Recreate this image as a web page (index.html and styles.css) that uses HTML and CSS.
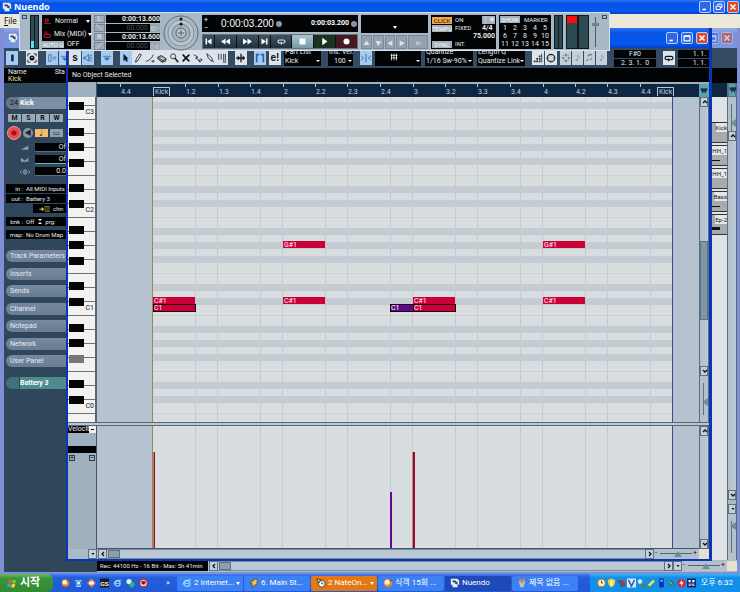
FILE: index.html
```html
<!DOCTYPE html>
<html lang="ko">
<head>
    <meta charset="UTF-8">
    <meta name="viewport" content="width=device-width, initial-scale=1.0">
    <title>Nuendo</title>
    <link rel="stylesheet" href="styles.css">
</head>
<body>
    <svg class="symbols" aria-hidden="true">
        <symbol id="app" viewBox="0 0 12 12"><path d="M1 1h8l2 2v5H9v3H3V8H1z" fill="#e8eef8"/><path d="M3 3h4v2H3zM5 6l4-2v4z" fill="#27405c"/></symbol>
        <symbol id="min" viewBox="0 0 12 12"><path d="M3 8h4v2H3z" fill="#fff"/></symbol>
        <symbol id="max" viewBox="0 0 12 12"><path d="M2.5 3.5h7v6h-7zM2.5 4h7" fill="none" stroke="#fff" stroke-width="1.4"/></symbol>
        <symbol id="restore" viewBox="0 0 12 12"><path d="M4.500 4V2.500h5v4H8M2.500 5h5v4h-5z" fill="none" stroke="#fff" stroke-width="1.2"/></symbol>
        <symbol id="close" viewBox="0 0 12 12"><path d="M3 3l6 6M9 3l-6 6" stroke="#fff" stroke-width="1.8"/></symbol>
        <symbol id="up" viewBox="0 0 8 8"><path d="M2 5l2-2 2 2" fill="none" stroke="#111" stroke-width="1.3"/></symbol>
        <symbol id="down" viewBox="0 0 8 8"><path d="M2 3l2 2 2-2" fill="none" stroke="#111" stroke-width="1.3"/></symbol>
        <symbol id="left" viewBox="0 0 8 8"><path d="M5 2L3 4l2 2" fill="none" stroke="#111" stroke-width="1.3"/></symbol>
        <symbol id="right" viewBox="0 0 8 8"><path d="M3 2l2 2-2 2" fill="none" stroke="#111" stroke-width="1.3"/></symbol>
        <symbol id="menu" viewBox="0 0 8 8"><path d="M2.500 3h3L4 5z" fill="#111"/></symbol>
        <symbol id="scroll" viewBox="0 0 12 12"><path d="M1 2h10v4H1z" fill="#16324c"/><path d="M3 6v4l3-3 3 3V6z" fill="#16324c"/></symbol>
        <symbol id="ie" viewBox="0 0 12 12"><circle cx="6" cy="6.500" r="3.500" fill="none" stroke="#7fd0ff" stroke-width="1.8"/><path d="M3 6.500h6" stroke="#7fd0ff" stroke-width="1.4"/><path d="M1 8Q3 2 11 2" fill="none" stroke="#bfe8ff"/></symbol>
        <symbol id="ball" viewBox="0 0 12 12"><circle cx="6" cy="6" r="5" fill="#f08a24"/><circle cx="5" cy="5" r="3" fill="#fff3d8"/><path d="M8 1l3 2-2 2z" fill="#a84c08"/></symbol>
        <symbol id="loop" viewBox="0 0 12 12"><path d="M5 8H3.500C.5 8 .5 4 3.500 4h5c3 0 3 4 0 4H8" fill="none" stroke="currentColor" stroke-width="1.400"/><path d="M5 6l3 2-3 2.500z" fill="currentColor"/></symbol>
        <symbol id="filter" viewBox="0 0 12 12"><path d="M1 4h10M3 6h6l-3 3z" fill="#456f9c" stroke="#456f9c"/></symbol>
    </svg>

    <header class="titlebar titlebar-main">
        <svg class="app-icon"><use href="#app"/></svg>
        <h1>Nuendo</h1>
        <div class="window-buttons">
            <button aria-label="Minimize"><svg><use href="#min"/></svg></button>
            <button aria-label="Restore"><svg><use href="#restore"/></svg></button>
            <button class="close" aria-label="Close"><svg><use href="#close"/></svg></button>
        </div>
    </header>
    <nav class="menubar"><a href="#file"><u>F</u>ile</a></nav>

    <main class="desktop">
        <!-- Project window behind the editor -->
        <section class="window project">
            <div class="titlebar titlebar-inactive">
                <svg class="app-icon"><use href="#app"/></svg>
                <div class="window-buttons">
                    <button aria-label="Maximize"><svg><use href="#max"/></svg></button>
                    <button class="close" aria-label="Close"><svg><use href="#close"/></svg></button>
                </div>
            </div>
            <div class="toolbar project-tools">
                <button class="tool on" aria-label="Activate"><svg viewBox="0 0 12 12"><path d="M5 2h3v8H5z" fill="#0b2440"/></svg></button>
                <button class="tool" aria-label="Snap view"><svg viewBox="0 0 12 12"><path d="M1 4V1h3M8 1h3v3M11 8v3H8M4 11H1V8" fill="none" stroke="#111"/><circle cx="6" cy="6" r="3" fill="#111"/><path d="M5 5h2v1H5z" fill="#fff"/></svg></button>
                <span class="tool-group">
                    <button class="tool on" aria-label="Inspector"><svg viewBox="0 0 12 12"><path d="M2 2h3v8H2zM7 6l2-2 2 2-2 2z" fill="none" stroke="#456f9c"/></svg></button>
                    <button class="tool on" aria-label="Info line"><svg><use href="#filter"/></svg></button>
                </span>
            </div>
            <div class="infoline project-info"><div>Name<br><em>Kick</em></div><div>Sta</div></div>
            <div class="project-body">
                <aside class="inspector">
                    <div class="track-name"><span>24</span><strong>Kick</strong></div>
                    <div class="track-buttons"><button>M</button><button>S</button><button>R</button><button>W</button></div>
                    <div class="record-row">
                        <button class="rec" aria-label="Record enable"></button>
                        <button class="monitor" aria-label="Monitor">◀</button>
                        <button class="note-mode" aria-label="Timebase">♩</button>
                        <button class="lane-mode" aria-label="Lanes">▭</button>
                    </div>
                    <div class="faders">
                        <div class="fader"><svg viewBox="0 0 12 8"><path d="M1 6l9-5v5z" fill="#8d9db0"/></svg><span>Of</span></div>
                        <div class="fader full"><svg viewBox="0 0 12 8"><path d="M1 1v5h9V1L6 5z" fill="#8d9db0"/></svg><span>Of</span></div>
                        <div class="fader end"><svg viewBox="0 0 12 8"><path d="M2 2L0 4l2 2M10 2l2 2-2 2M6 1v6M4 4h4" fill="none" stroke="#8d9db0"/><circle cx="6" cy="4" r="2.500" fill="none" stroke="#8d9db0"/></svg><span>0.0</span></div>
                    </div>
                    <dl class="routing">
                        <div><dt>in :</dt><dd>All MIDI Inputs</dd></div>
                        <div><dt>out :</dt><dd>Battery 3</dd></div>
                        <div class="channel"><dt><b>➜▥</b></dt><dd>chn:</dd></div>
                        <div class="bank"><dt>bnk :</dt><dd>Off <i></i> prg:</dd></div>
                        <div class="map"><dt>map:</dt><dd>No Drum Map</dd></div>
                    </dl>
                    <div class="tabs">
                        <button>Track Parameters</button>
                        <button>Inserts</button>
                        <button>Sends</button>
                        <button>Channel</button>
                        <button>Notepad</button>
                        <button>Network</button>
                        <button>User Panel</button>
                    </div>
                    <button class="instrument">Battery 3</button>
                </aside>
                <div class="lanes">
                    <div class="lanes-ruler"></div>
                    <div class="part kick"><span>Kick</span></div>
                    <div class="part line"><span>HH_1</span></div>
                    <div class="part"><span>HH_1</span></div>
                    <div class="part line"><span>Bass</span></div>
                    <div class="part thick"><span>Ep-2</span></div>
                </div>
                <div class="vbar project-vbar">
                    <button class="corner-icon" aria-label="Ruler menu"><svg><use href="#scroll"/></svg></button>
                    <div class="vzoom tall"><i></i></div>
                    <button aria-label="Up"><svg><use href="#up"/></svg></button>
                    <div class="track"></div>
                    <button aria-label="Down"><svg><use href="#down"/></svg></button>
                    <button class="preset" aria-label="Zoom presets"><svg><use href="#menu"/></svg></button>
                    <div class="vzoom"><i></i></div>
                </div>
            </div>
            <footer class="hbar project-hbar">
                <output>Rec: 44100 Hz - 16 Bit - Max: 5h 41min</output>
                <button aria-label="Left"><svg><use href="#left"/></svg></button>
                <div class="track"><span></span></div>
                <button aria-label="Right"><svg><use href="#right"/></svg></button>
                <button aria-label="Zoom presets"><svg><use href="#menu"/></svg></button>
                <div class="hzoom"><i></i></div>
                <span class="grip"></span>
            </footer>
        </section>

        <!-- Key editor -->
        <section class="window editor">
            <div class="titlebar">
                <div class="window-buttons">
                    <button aria-label="Minimize"><svg><use href="#min"/></svg></button>
                    <button aria-label="Maximize"><svg><use href="#max"/></svg></button>
                    <button class="close" aria-label="Close"><svg><use href="#close"/></svg></button>
                </div>
            </div>
            <div class="toolbar">
                <span class="tool-group">
                    <button class="tool solo" aria-label="Solo">s</button>
                    <button class="tool on" aria-label="Feedback"><svg viewBox="0 0 12 12"><path d="M1 5h2l4-3v8L3 7H1zM8 4l3-2M8 6h3M8 8l3 2" fill="none" stroke="#2c5a8c"/></svg></button>
                </span>
                <button class="tool on" aria-label="Info line"><svg><use href="#filter"/></svg></button>
                <span class="tool-group edit-tools">
                    <button class="tool on" aria-label="Select"><svg viewBox="0 0 12 12"><path d="M3 1v9l2-2 2 3 1-1-1-3h2z" fill="#0b1a30"/></svg></button>
                    <button class="tool" aria-label="Draw"><svg viewBox="0 0 12 12"><path d="M3 11l1-4 4-6 2 1-4 7z" fill="none" stroke="#222"/></svg></button>
                    <button class="tool" aria-label="Line"><svg viewBox="0 0 12 12"><path d="M1 10Q7 9 10 2M8 10l2 1 1-2z" fill="none" stroke="#222"/></svg></button>
                    <button class="tool" aria-label="Erase"><svg viewBox="0 0 12 12"><path d="M1 5l4-2 6 4-1 3-4 1-5-4zM1 5l6 4 4-2M7 9l-1 2" fill="#999" stroke="#222"/></svg></button>
                    <button class="tool" aria-label="Zoom"><svg viewBox="0 0 12 12"><circle cx="5" cy="4" r="3" fill="none" stroke="#222"/><path d="M7 6l4 5" stroke="#222" stroke-width="2"/></svg></button>
                    <button class="tool" aria-label="Mute"><svg viewBox="0 0 12 12"><path d="M2 2l8 8M10 2l-8 8" stroke="#111" stroke-width="2"/></svg></button>
                    <button class="tool" aria-label="Split"><svg viewBox="0 0 12 12"><path d="M1 2l5 3-3 1 6 4M8 7l3 1-3 3-1-3" fill="none" stroke="#222"/></svg></button>
                    <button class="tool" aria-label="Glue"><svg viewBox="0 0 12 12"><path d="M2 1l2 1 5 5-1 3-4-4zM8 9l3 2" fill="none" stroke="#222"/></svg></button>
                    <button class="tool" aria-label="Warp"><svg viewBox="0 0 12 12"><path d="M2 1v7M5 1v7M8 1v9M10 1v9M7 11h4" stroke="#222"/></svg></button>
                </span>
                <button class="tool" aria-label="Autoscroll"><svg viewBox="0 0 12 12"><path d="M6 1v10M0 6h10" stroke="#111" stroke-width="1.500"/><path d="M2 3l3 3-3 3zM8 3l3 3-3 3z" fill="#111"/></svg></button>
                <span class="tool-group wide-gap">
                    <button class="tool on" aria-label="Part borders"><svg viewBox="0 0 12 12"><path d="M2 11V2h3M10 11V2H7" fill="none" stroke="#2565aa" stroke-width="2"/></svg></button>
                    <button class="tool edit" aria-label="Edit active part">e!</button>
                </span>
                <label class="pick part-pick"><span>Part List</span><select><option>Kick</option></select></label>
                <label class="pick velocity-pick"><span>Ins. Vel.</span><select><option>100</option></select></label>
                <button class="tool on" aria-label="Snap"><svg viewBox="0 0 12 12"><path d="M6 1v10M0 3l3 3-3 3M12 3L9 6l3 3" fill="none" stroke="#2c5a8c"/></svg></button>
                <label class="pick snap-pick"><svg viewBox="0 0 12 12"><path d="M2 4h8M2 7h8M3 2v8M6 2v8M9 2v8" stroke="#eee"/></svg><select aria-label="Snap type"><option></option></select></label>
                <label class="pick quantize-pick"><span>Quantize</span><select><option>1/16 Sw-90%</option></select></label>
                <label class="pick quantize-pick"><span>Length Q</span><select><option>Quantize Link</option></select></label>
                <span class="tool-group">
                    <button class="tool" aria-label="Step input"><svg viewBox="0 0 12 12"><path d="M1 9h2v2H1zM4 9h2v2H4zM4 6h2v2H4zM7 9h2v2H7zM7 6h2v2H7zM7 3h2v2H7zM10 1h1v10h-1z" fill="#222"/></svg></button>
                    <button class="tool" aria-label="MIDI input"><svg viewBox="0 0 12 12"><circle cx="6" cy="6" r="4.500" fill="none" stroke="#222" stroke-width="1.500"/><path d="M3 6h1M8 6h1M6 3v1M6 8v1" stroke="#222"/></svg></button>
                </span>
                <span class="tool-group dim">
                    <button class="tool" aria-label="Pitch"><svg viewBox="0 0 12 12"><path d="M6 1v3M6 8v3M1 6h3M8 6h3M3 3h1M8 3h1M3 9h1M8 9h1" stroke="#777" stroke-width="2"/></svg></button>
                    <button class="tool" aria-label="Note on">♪</button>
                    <button class="tool" aria-label="Velocity on">♫</button>
                    <button class="tool" aria-label="Velocity off">♪</button>
                </span>
                <output class="mouse-info"><span>F#0</span><span>2. 3. 1.&nbsp; 0</span></output>
                <button class="tool" aria-label="Loop"><svg><use href="#loop"/></svg></button>
                <output class="loop-info"><span>1. 1.</span><span>1. 1.</span></output>
            </div>
            <div class="infoline">No Object Selected</div>
            <div class="editor-grid">
                <div class="ruler-head"></div>
                <div class="ruler">
                    <span class="tick" style="--x: 23">4.4</span>
                    <span class="locator" style="--x: 56">Kick</span>
                    <span class="tick" style="--x: 88">1.2</span>
                    <span class="tick" style="--x: 121">1.3</span>
                    <span class="tick" style="--x: 153">1.4</span>
                    <span class="tick bar" style="--x: 186">2</span>
                    <span class="tick" style="--x: 218">2.2</span>
                    <span class="tick" style="--x: 250">2.3</span>
                    <span class="tick" style="--x: 283">2.4</span>
                    <span class="tick bar" style="--x: 316">3</span>
                    <span class="tick" style="--x: 348">3.2</span>
                    <span class="tick" style="--x: 380">3.3</span>
                    <span class="tick" style="--x: 413">3.4</span>
                    <span class="tick bar" style="--x: 446">4</span>
                    <span class="tick" style="--x: 478">4.2</span>
                    <span class="tick" style="--x: 510">4.3</span>
                    <span class="tick" style="--x: 543">4.4</span>
                    <span class="locator locator-end" style="--x: 560">Kick</span>
                </div>
                <button class="corner-icon" aria-label="Ruler menu"><svg><use href="#scroll"/></svg></button>

                <div class="keyboard">
                    <div class="octave"><span>C3</span></div>
                    <div class="octave"><span>C2</span></div>
                    <div class="octave"><span>C1</span></div>
                    <div class="octave hovered"><span>C0</span></div>
                    <div class="octave"></div>
                </div>
                <div class="roll">
                    <div class="part-area"></div>
                    <span class="note" style="--x: 56; --y: 200">C#1</span>
                    <span class="note selected" style="--x: 56; --y: 207">C1</span>
                    <span class="note" style="--x: 186; --y: 144">G#1</span>
                    <span class="note" style="--x: 186; --y: 200">C#1</span>
                    <span class="note selected soft" style="--x: 293; --y: 207">C1</span>
                    <span class="note" style="--x: 316; --y: 200">C#1</span>
                    <span class="note selected" style="--x: 316; --y: 207">C1</span>
                    <span class="note" style="--x: 446; --y: 144">G#1</span>
                    <span class="note" style="--x: 446; --y: 200">C#1</span>
                </div>
                <div class="vbar">
                    <button aria-label="Up"><svg><use href="#up"/></svg></button>
                    <div class="track"><span></span></div>
                    <button aria-label="Down"><svg><use href="#down"/></svg></button>
                    <div class="vzoom"><i></i></div>
                </div>

                <div class="splitter"></div>

                <div class="lane-head">
                    <label class="pick lane-pick"><select aria-label="Controller"><option>Velocity</option></select></label>
                    <div class="lane-value"></div>
                    <div class="lane-buttons"><button aria-label="Add lane">+</button><button aria-label="Remove lane">−</button></div>
                </div>
                <div class="velocity">
                    <div class="part-area"></div>
                    <span class="stick cursor" style="--x: 56; --h: 96"></span>
                    <span class="stick soft" style="--x: 293; --h: 56"></span>
                    <span class="stick" style="--x: 315; --h: 96"></span>
                </div>
                <div class="vbar">
                    <button aria-label="Up"><svg><use href="#up"/></svg></button>
                    <div class="track"></div>
                    <button aria-label="Down"><svg><use href="#down"/></svg></button>
                </div>
            </div>
            <div class="hbar">
                <button class="lane-menu" aria-label="Lane presets"><svg><use href="#menu"/></svg></button>
                <button aria-label="Left"><svg><use href="#left"/></svg></button>
                <div class="track"><span></span></div>
                <button aria-label="Right"><svg><use href="#right"/></svg></button>
                <div class="hzoom"><i></i></div>
                <span class="grip"></span>
            </div>
        </section>
    </main>

    <!-- Transport panel floats above both windows -->
    <section class="transport" aria-label="Transport">
        <button class="panel-close" aria-label="Close panel"></button>
        <div class="meter input-meter"><i></i><i></i></div>
        <div class="modes screen">
            <div class="mode"><svg viewBox="0 0 12 10"><circle cx="5" cy="3" r="2" fill="none" stroke="#d3202a" stroke-width="1.500"/><path d="M1 7h10" stroke="#d3202a"/></svg><span>Normal</span><i class="arrow"></i></div>
            <div class="mode"><svg viewBox="0 0 12 10"><circle cx="4" cy="2" r="1.500" fill="none" stroke="#d3202a"/><rect x="1" y="4" width="9" height="4" rx="2" fill="none" stroke="#d3202a" stroke-width="1.300"/></svg><span>Mix (MIDI)</span><i class="arrow"></i></div>
            <div class="auto"><button>AUTO Q</button><span>OFF</span></div>
        </div>
        <div class="locators">
            <button>L</button><div class="screen"><b>0:00:13.600</b></div>
            <button>╲</button><div class="screen faint"><span>00.000</span><button>▯▷</button></div>
            <button>R</button><div class="screen"><b>0:00:13.600</b></div>
            <button>╱</button><div class="screen faint"><span>00.000</span><button>▷▯</button></div>
        </div>
        <svg class="jog" viewBox="0 0 36 36">
            <circle cx="18" cy="18" r="17" fill="#aab8c3" stroke="#5d6b76"/>
            <circle cx="18" cy="18" r="13" fill="#b9c5ce" stroke="#84929d"/>
            <circle cx="18" cy="18" r="9" fill="#a5b3be" stroke="#74828d"/>
            <circle cx="18" cy="18" r="5" fill="#b9c5ce" stroke="#596672"/>
            <path d="M18 15v6M15 18h6" stroke="#596672"/>
            <circle cx="18" cy="4" r="1.500" fill="#111"/><circle cx="18" cy="9" r="1.500" fill="#111"/>
        </svg>
        <div class="main-transport">
            <div class="screen time">
                <span class="nudge">+<br>−</span>
                <strong>0:00:03.200</strong><i class="clock"></i>
                <b>0:00:03.200</b><i class="clock"></i>
            </div>
            <div class="transport-buttons">
                <button class="narrow" aria-label="To start"><svg viewBox="0 0 12 12"><path d="M2 2h2v8H2zM10 2v8L4 6z" fill="#fff"/></svg></button>
                <button aria-label="Rewind"><svg viewBox="0 0 12 12"><path d="M6 2v8L0 6zM12 2v8L6 6z" fill="#fff"/></svg></button>
                <button aria-label="Forward"><svg viewBox="0 0 12 12"><path d="M0 2v8l6-4zM6 2v8l6-4z" fill="#fff"/></svg></button>
                <button class="narrow" aria-label="To end"><svg viewBox="0 0 12 12"><path d="M2 2v8l6-4zM8 2h2v8H8z" fill="#fff"/></svg></button>
                <button aria-label="Cycle"><svg><use href="#loop"/></svg></button>
                <button class="stop" aria-label="Stop"><svg viewBox="0 0 12 12"><path d="M2 2h8v8H2z" fill="#fff"/></svg></button>
                <button class="play" aria-label="Play"><svg viewBox="0 0 12 12"><path d="M3 1v10l7-5z" fill="#fff"/></svg></button>
                <button class="record" aria-label="Record"><svg viewBox="0 0 12 12"><circle cx="6" cy="6" r="4" fill="#fff"/></svg></button>
            </div>
        </div>
        <div class="arranger">
            <div class="screen"><i class="arrow"></i></div>
            <div class="arranger-buttons">
                <button>▲</button><button>▼</button><button>◀</button><button>▶</button><button class="wide">⇇</button>
            </div>
        </div>
        <div class="sync screen">
            <button class="lit">CLICK</button><span>ON</span><b class="precount">‖✳</b>
            <button>TEMPO</button><span>FIXED</span><b>4/4</b>
            <b class="tempo">75.000</b>
            <button>SYNC</button><span>INT.</span>
        </div>
        <div class="markers screen">
            <div class="marker-head"><button>SHOW</button><span>MARKER</span></div>
            <ol>
                <li>1</li><li>2</li><li>3</li><li>4</li><li>5</li>
                <li>6</li><li>7</li><li>8</li><li>9</li><li>10</li>
                <li>11</li><li>12</li><li>13</li><li>14</li><li>15</li>
            </ol>
        </div>
        <div class="meter"><i></i><i></i></div>
        <div class="master-meter"><i class="clip"></i><i></i></div>
        <div class="volume"><i></i></div>
        <button class="panel-close" aria-label="Panel menu"></button>
    </section>

    <footer class="taskbar">
        <button class="start">
            <svg viewBox="0 0 12 12"><path d="M2 2q2-1 4 0L5 6Q3 5 1 6z" fill="#f0582a"/><path d="M7 2q2 1 4 0l-1 4q-2 1-4 0z" fill="#86c440"/><path d="M1 7q2-1 4 0l-1 4Q2 10 0 11z" fill="#3aa0ef"/><path d="M6 7q2 1 4 0l-1 4q-2 1-4 0z" fill="#ffd02e"/></svg>
            시작
        </button>
        <div class="quick">
            <svg><use href="#ball"/></svg>
            <svg viewBox="0 0 12 12"><path d="M2 2h8l-1 9H3z" fill="#d6edff"/><circle cx="6" cy="6" r="3" fill="none" stroke="#2680d8" stroke-width="1.500"/></svg>
            <svg viewBox="0 0 12 12"><path d="M6 0l6 6-6 6-6-6z" fill="#f0803c"/><path d="M3 4h6v4H3z" fill="#fff"/></svg>
            <svg viewBox="0 0 12 12"><path d="M0 0h12v12H0z" fill="#1b1b1b"/><text x="6" y="10" text-anchor="middle">GS</text></svg>
            <svg><use href="#ie"/></svg>
            <svg viewBox="0 0 12 12"><circle cx="4" cy="4" r="3.500" fill="#d9eefa"/><path d="M4 8l5-4 3 4-3 4H6z" fill="#35b56c"/></svg>
            <svg viewBox="0 0 12 12"><circle cx="6" cy="6" r="5" fill="#eee" stroke="#c22" stroke-width="1.500"/><path d="M3 3h6v4H3z" fill="#c22"/><path d="M4 8l2-3 2 3z" fill="#111"/></svg>
        </div>
        <span class="more">»</span>
        <div class="tasks">
            <button><svg><use href="#ie"/></svg><span>2 Internet...</span><i class="arrow"></i></button>
            <button><svg viewBox="0 0 12 12"><path d="M3 11l1-4-3-1 7-5 3 3-2 1 1 2z" fill="#f2c25a" stroke="#6b4a16"/></svg><span>6. Main St...</span></button>
            <button class="alert"><svg viewBox="0 0 12 12"><circle cx="7" cy="7" r="4" fill="#fff" stroke="#333"/><path d="M1 1l5 1-3 4zM7 5v2h2" fill="#ffd02e" stroke="#333"/></svg><span>2 NateOn...</span><i class="arrow"></i></button>
            <button><svg><use href="#ball"/></svg><span>식객 15회 ...</span></button>
            <button class="active"><svg><use href="#app"/></svg><span>Nuendo</span></button>
            <button><svg viewBox="0 0 12 12"><path d="M2 4l8-1-2 8H4z" fill="#b8c4c8"/><path d="M3 1l3 5M9 0L6 6M6 1v4" stroke="#d6823c" stroke-width="1.500"/></svg><span>제목 없음 ...</span></button>
        </div>
        <div class="tray">
            <svg viewBox="0 0 12 12"><circle cx="6" cy="6" r="5" fill="#fff2c2" stroke="#c57b1c" stroke-width="1.500"/><path d="M6 3v3h2" stroke="#222" fill="none"/></svg>
            <svg viewBox="0 0 12 12"><path d="M1 2l5-2 5 2q0 7-5 10Q1 9 1 2z" fill="#f3d33c"/><path d="M5 3h2v6H5z" fill="#fff"/></svg>
            <svg viewBox="0 0 12 12"><path d="M1 2h7v5H1zM4 6h7v5H4z" fill="#47607e"/><path d="M6 3l5 5M11 3L6 8" stroke="#e02a2a" stroke-width="1.500"/></svg>
            <svg viewBox="0 0 12 12"><path d="M0 0h12v12H0z" fill="#dbe6f2"/><path d="M2 2l4 8 4-8" fill="none" stroke="#2855b5" stroke-width="2"/></svg>
            <svg viewBox="0 0 12 12"><circle cx="4" cy="4" r="3" fill="#d8f1e2"/><path d="M4 8l7-3v6H6z" fill="#33a263"/><path d="M7 7l4 4M11 7l-4 4" stroke="#d22"/></svg>
            <svg viewBox="0 0 12 12"><path d="M2 11l-1-3 7-7 3 3-7 7z" fill="#cdeb78" stroke="#527f29"/></svg>
            <svg viewBox="0 0 12 12"><path d="M3 0h6v12H3z" fill="#1230a8"/><path d="M4 2h4v2H4z" fill="#7aa4ff"/></svg>
            <svg viewBox="0 0 12 12"><path d="M1 2l6 1 4 6-4 2-5-4z" fill="#2e8061"/><path d="M3 4l4 4" stroke="#cfe"/></svg>
            <svg viewBox="0 0 12 12"><circle cx="6" cy="6" r="5.500" fill="#e22230"/><path d="M7 1L3 7h3l-1 4 4-6H6z" fill="#fff"/></svg>
            <svg viewBox="0 0 12 12"><path d="M0 0h12v12H0z" fill="#10246e"/><path d="M2 2h3v3H2zM7 2h3v3H7zM2 7h8v1H2zM2 9h3v1H2zM7 9h3v1H7z" fill="#fff"/></svg>
            <time>오후 6:32</time>
        </div>
    </footer>
</body>
</html>
```

FILE: styles.css
```css
:root {
    --slate: #31475c;
    --panel: #a9b8c6;
    --roll: #d8dde0;
    --stripe: #c4cbd2;
    --outside: #b6c2d0;
    --gridline: #c5cbd0;
    --note: #cc0038;
    --soft: #5d0a8c;
}

* {
    box-sizing: border-box;
}

body {
    margin: 0;
    min-height: 100vh;
    display: flex;
    flex-direction: column;
    position: relative;
    overflow: hidden;
    background: var(--slate);
    color: #e6ebf0;
    font: 7px/9px Roboto, "Noto Sans CJK KR", sans-serif;
}

button, select {
    font: inherit;
    color: inherit;
    border: 0;
    padding: 0;
    margin: 0;
    border-radius: 0;
    background: none;
    appearance: none;
}

svg {
    display: block;
    width: 10px;
    height: 10px;
    flex: none;
}

.symbols {
    position: absolute;
    width: 0;
    height: 0;
}

.arrow {
    border: 2px solid transparent;
    border-top: 3px solid #fff;
    border-bottom: 0;
}

.screen {
    background: #020304;
}

/* Title bars */
.titlebar {
    display: flex;
    align-items: center;
    height: 20px;
    padding: 0 4px;
    background: linear-gradient(#2a72f5, #0753e6 25%, #0658ee 80%, #0440c4);
}

.titlebar-main {
    height: 14px;
    padding: 0 1px 0 2px;
}

.titlebar h1 {
    margin: 0 0 0 2px;
    font: bold 9px/14px "Noto Sans", sans-serif;
    color: #fff;
}

.titlebar-inactive {
    background: linear-gradient(#93aceb, #7590dc 30%, #7a98e2);
}

.app-icon {
    width: 10px;
    height: 10px;
}

.window-buttons {
    display: flex;
    gap: 2px;
    margin-left: auto;
}

.window-buttons button {
    width: 12px;
    height: 12px;
    border: 1px solid #b8cdf8;
    border-radius: 2px;
    background: #2e68e6;
}

.window-buttons .close {
    background: #dc4c28;
}

.titlebar-inactive button {
    opacity: .6;
}

.menubar {
    height: 14px;
    padding: 2px 4px;
    background: #ece9d8;
    font: 8px/10px "Noto Sans", sans-serif;
}

.menubar a {
    color: #111;
    text-decoration: none;
}

/* Windows */
.desktop {
    flex: 1;
    display: flex;
    flex-direction: column;
    position: relative;
}

.window {
    display: flex;
    flex-direction: column;
}

.project {
    flex: 1;
    border: solid #7f8fd6;
    border-width: 0 3px 2px 4px;
    background: var(--slate);
}

.editor {
    position: absolute;
    top: 0;
    left: 66px;
    right: 28px;
    bottom: 13px;
    border: solid #0a35b8;
    border-width: 0 3px 2px 2px;
    background: #9fb0bf;
}

.editor .titlebar {
    padding: 0 1px;
}

.editor .window-buttons {
    gap: 3px;
}

.toolbar {
    display: flex;
    align-items: center;
    height: 20px;
    gap: 7px;
    padding: 0 0 0 1px;
    background: #344b62;
    overflow: hidden;
}

.project-tools {
    padding-left: 2px;
    gap: 8px;
}

.tool-group {
    display: flex;
    gap: 1px;
}

.tool-group.wide-gap {
    gap: 3px;
}

.tool-group.edit-tools {
    gap: 0;
}

.tool {
    display: grid;
    place-items: center;
    flex: none;
    width: 12px;
    height: 14px;
    background: #dbe4ec;
    color: #111;
}

.tool.on {
    background: #a5cbf2;
}

.tool.solo, .tool.edit {
    font: bold 10px/12px "Liberation Sans", sans-serif;
}

.tool-group.dim {
    margin-left: -4px;
}

.dim .tool {
    width: 11px;
    background: #c5d0da;
    color: #70767c;
}

.pick {
    display: grid;
    flex: none;
    position: relative;
    height: 16px;
    background: #020304;
    white-space: nowrap;
    overflow: hidden;
}

.pick > span {
    padding-left: 1px;
    line-height: 5px;
}

.pick select {
    width: 100%;
    padding-left: 1px;
    line-height: 9px;
    align-self: end;
}

.pick > svg {
    position: absolute;
    left: 14px;
    top: 2px;
}

.pick::after {
    content: "";
    position: absolute;
    right: 1px;
    bottom: 4px;
    border: 2px solid transparent;
    border-top-color: #fff;
    border-bottom: 0;
}

.part-pick {
    width: 37px;
    margin-left: -4px;
}

.velocity-pick {
    width: 25px;
}

.velocity-pick select {
    padding-left: 6px;
}

.snap-pick {
    width: 46px;
    margin-left: -4px;
}

.quantize-pick {
    width: 48px;
    margin-left: -3px;
}

.mouse-info, .loop-info {
    display: flex;
    flex: none;
    flex-direction: column;
    width: 42px;
    text-align: center;
}

.mouse-info span, .loop-info span {
    height: 8px;
    line-height: 8px;
    background: #020304;
}

.mouse-info span + span, .loop-info span + span {
    margin-top: 1px;
}

.loop-info {
    width: 32px;
    margin-left: -4px;
    text-align: right;
}

.loop-info span {
    padding-right: 4px;
}

.infoline {
    height: 14px;
    padding-left: 4px;
    line-height: 15px;
    background: #010203;
}

/* Key editor grid */
.editor-grid {
    flex: 1;
    display: grid;
    grid-template-columns: 29px 1fr 10px;
    grid-template-rows: 15px 325px 4px 1fr;
}

.ruler-head {
    background: #9fb0bf;
    border-right: 1px solid #445766;
}

.ruler {
    position: relative;
    margin-top: 2px;
    background: #0d2642;
    color: #c6d0da;
    overflow: hidden;
}

.ruler span {
    position: absolute;
    left: calc(var(--x) * 1px);
    top: 0;
}

.ruler .tick {
    padding: 4px 0 0 1px;
}

.ruler .tick::before {
    content: "";
    position: absolute;
    left: 0;
    top: 0;
    width: 1px;
    height: 3px;
    background: #b8c4cf;
}

.ruler .locator {
    top: 3px;
    padding: 0 1px;
    line-height: 8px;
    border: 1px solid #b8c4cf;
    border-width: 1px 1px 0;
}

.corner-icon {
    display: grid;
    place-items: center;
    width: 10px;
    margin-top: 2px;
    background: #5ba3ad;
}

.corner-icon svg {
    width: 8px;
}

.keyboard {
    overflow: hidden;
    border-right: 2px solid #566974;
    background: #f2f2f0;
}

.octave {
    height: 98px;
    padding: 87px 1px 0 0;
    text-align: right;
    color: #222;
    --black: #050505;
    --fsharp: var(--black);
    background:
        linear-gradient(transparent 9px, var(--black) 9px 17px, transparent 17px 24px, var(--black) 24px 32px, transparent 32px 40px, var(--fsharp) 40px 48px, transparent 48px 65px, var(--black) 65px 73px, transparent 73px 81px, var(--black) 81px 89px, transparent 89px) 1px 0 / 15px 98px no-repeat,
        repeating-linear-gradient(#6f7375 0 1px, transparent 1px 14px);
}

/* B3 down to C#3 is scrolled out of view */
.octave:first-child {
    margin-top: -76px;
}

.octave.hovered {
    --fsharp: #777;
}

.octave span {
    line-height: 9px;
}

.roll, .velocity {
    position: relative;
    background: var(--outside);
    overflow: hidden;
}

.part-area {
    width: 521px;
    height: 100%;
    margin-left: 55px;
    border: solid #8c8f4e;
    border-width: 0 1px;
    border-right-color: #3b4a8c;
    background:
        linear-gradient(90deg, transparent 42px, var(--gridline) 42px 43px, transparent 43px 64px, var(--gridline) 64px) 0 0 / 65px 100%,
        var(--roll);
}

.roll .part-area {
    background:
        linear-gradient(90deg, transparent 42px, var(--gridline) 42px 43px, transparent 43px 64px, var(--gridline) 64px) 0 0 / 65px 100%,
        linear-gradient(#cbd0d4 1px, transparent 1px 11px, var(--stripe) 11px 18px, transparent 18px 25px, var(--stripe) 25px 32px, transparent 32px 39px, var(--stripe) 39px 46px, transparent 46px 56px, #cbd0d4 56px 57px, transparent 57px 67px, var(--stripe) 67px 74px, transparent 74px 81px, var(--stripe) 81px 88px, transparent 88px) 0 -76px / 100% 98px,
        var(--roll);
}

.note {
    position: absolute;
    left: calc(var(--x) * 1px);
    top: calc(var(--y) * 1px);
    width: 42px;
    height: 7px;
    padding-left: 1px;
    line-height: 8px;
    background: var(--note);
    color: #fff;
    overflow: hidden;
}

.note.selected {
    width: 43px;
    height: 8px;
    padding-left: 0;
    border: 1px solid #240010;
    line-height: 7px;
}

.note.soft {
    width: 24px;
    background: var(--soft);
}

.splitter {
    grid-column: 1 / -1;
    background: #b9c6cf;
    border: solid #566974;
    border-width: 1px 0;
}

.lane-head {
    border-right: 1px solid #445766;
}

.lane-pick {
    height: 7px;
    width: 28px;
}

.lane-pick select {
    padding: 0;
    line-height: 7px;
}

.lane-pick::after {
    right: 0;
    bottom: 0;
    width: 7px;
    height: 7px;
    border: 0;
    background: linear-gradient(#111, #111) 2px 3px / 3px 1px no-repeat, #eee;
}

.lane-value {
    height: 7px;
    margin-top: 13px;
    background: #010203;
}

.lane-buttons {
    display: flex;
    justify-content: space-between;
    margin-top: 2px;
    padding: 0 1px;
}

.lane-buttons button {
    width: 6px;
    height: 6px;
    border: 1px solid #2c3e4d;
    line-height: 4px;
    color: #111;
}

.velocity {
    border-bottom: 1px solid #445766;
}

.stick {
    position: absolute;
    left: calc(var(--x) * 1px);
    bottom: 0;
    width: 3px;
    height: calc(var(--h) * 1px);
    background: linear-gradient(90deg, #c9818c 1px, #8f0f2c 1px);
}

.stick.cursor {
    width: 2px;
    background: linear-gradient(90deg, #d0705c 1px, #8f0f2c 1px);
}

.stick.soft {
    width: 2px;
    background: var(--soft);
}

/* Scroll bars */
.vbar {
    display: flex;
    flex-direction: column;
    width: 10px;
    border: solid #5c6e7c;
    border-width: 0 1px;
    background: #a9bac8;
}

.vbar button, .hbar button {
    display: grid;
    place-items: center;
    flex: none;
    background: #c3d0da;
    border: 1px solid #61727f;
}

.vbar button {
    width: 8px;
    height: 10px;
}

.hbar button {
    width: 9px;
    height: 10px;
}

.vbar svg, .hbar svg {
    width: 8px;
    height: 8px;
}

.track {
    flex: 1;
    background: linear-gradient(90deg, #aebecb, #bccad5);
}

.vbar .track {
    display: flex;
    flex-direction: column;
    justify-content: center;
}

.vbar .track span {
    height: 79px;
    margin-top: 88px;
    border: 1px solid #61727f;
    background: #8095aa;
}

.hbar .track {
    display: flex;
    background: #b9c8d4;
    border: solid #7b8c99;
    border-width: 1px 0;
}

.hbar .track span {
    width: 12px;
    margin-left: 1px;
    background: #8b9fb3;
    border: 1px solid #61727f;
}

.vzoom {
    position: relative;
    height: 46px;
    background: linear-gradient(#61727f, #61727f) 3px 7px / 1px 32px no-repeat, #b3c1cc;
}

.vzoom i {
    position: absolute;
    right: 0;
    top: 22px;
    border: 4px solid transparent;
    border-left: 0;
    border-right: 6px solid #6f8c97;
}

.hzoom {
    position: relative;
    width: 45px;
    height: 10px;
    background: linear-gradient(#53636f, #53636f) 6px 4px / 32px 1px no-repeat, #b3c1cc;
}

.hzoom::before, .hzoom::after {
    content: "-";
    position: absolute;
    left: 1px;
    line-height: 9px;
    color: #111;
}

.hzoom::after {
    content: "+";
    left: 39px;
}

.hzoom i {
    position: absolute;
    left: 20px;
    top: 2px;
    border: 4px solid transparent;
    border-top: 0;
    border-bottom: 6px solid #6f8c97;
}

.hbar {
    display: flex;
    height: 10px;
    background: #a9bac8;
}

.hbar .lane-menu {
    margin-left: 20px;
    margin-right: 1px;
}

.grip {
    width: 10px;
    height: 10px;
    background: #e5e0cf;
}

/* Project window contents */
.project-info {
    display: flex;
    padding: 1px 0 0 4px;
    height: 15px;
    line-height: 7px;
}

.project-info div:last-child {
    padding-left: 28px;
}

.project-info em {
    font-style: normal;
    color: #e8e49a;
}

.project-body {
    flex: 1;
    display: flex;
    background: #39506a;
}

.inspector {
    width: 62px;
    padding: 14px 0 0 2px;
    margin-right: auto;
    background: #30465b;
    white-space: nowrap;
    overflow: hidden;
}

.track-name {
    display: flex;
    height: 12px;
    line-height: 12px;
    border-radius: 6px 0 0 6px;
    background: #7d8fa5;
    overflow: hidden;
}

.track-name span {
    width: 13px;
    padding-left: 4px;
    background: #64778d;
    color: #111;
}

.track-name strong {
    padding-left: 1px;
    color: #fff;
}

.track-buttons {
    display: flex;
    gap: 1px;
    margin: 5px 0 0 2px;
}

.track-buttons button {
    width: 13px;
    height: 8px;
    background: #9aa9b8;
    color: #111;
    font-weight: bold;
    line-height: 8px;
}

.record-row {
    display: flex;
    align-items: center;
    gap: 2px;
    margin: 4px 0 0 1px;
}

.rec {
    width: 14px;
    height: 14px;
    border: 1px solid #f2a3a3;
    border-radius: 50%;
    background: radial-gradient(#a80f18 25%, #e54b4f 35%);
}

.monitor {
    width: 10px;
    height: 10px;
    border-radius: 50%;
    background: #8496a8;
    color: #222;
    line-height: 10px;
}

.note-mode, .lane-mode {
    width: 13px;
    height: 8px;
    line-height: 8px;
    background: #f3bd6b;
    color: #111;
}

.lane-mode {
    background: #8fa0b0;
}

.faders {
    display: grid;
    gap: 3px;
    margin-top: 3px;
}

.fader {
    display: flex;
    align-items: center;
    justify-content: space-between;
    height: 9px;
    padding-left: 14px;
}

.fader span {
    width: 31px;
    height: 9px;
    text-align: right;
    background: #010203;
    border-bottom: 1px solid #5b6b78;
}

.fader.full span {
    border-bottom-color: #58b5b5;
}

.routing {
    margin: 8px 0 0;
    font-size: 6px;
}

.routing div {
    display: flex;
    height: 9px;
    margin-bottom: 1px;
    background: #010203;
}

.routing dt {
    width: 17px;
    margin-right: 3px;
    text-align: right;
}

.routing dd {
    margin: 0;
}

.routing .channel {
    margin-left: 27px;
}

.routing b {
    color: #e9dc57;
}

.routing i {
    display: inline-block;
    height: 5px;
    margin: 0 2px;
    border: 2px solid transparent;
    border-top-color: #fff;
    border-bottom-color: #fff;
}

.routing .bank, .routing .map {
    margin-top: 4px;
}

.tabs {
    display: flex;
    flex-direction: column;
    justify-content: space-between;
    height: 117px;
    margin-top: 11px;
}

.tabs button, .instrument {
    display: block;
    width: 100%;
    height: 12px;
    padding-left: 4px;
    border-radius: 6px 0 0 6px;
    background: linear-gradient(#75899f, #687d93);
    text-align: left;
    line-height: 12px;
}

.instrument {
    margin-top: 10px;
    padding-left: 14px;
    background: linear-gradient(90deg, #3f7377 13px, #1f4a50 13px 14px, #4f8a8c 14px);
    color: #fff;
    font-weight: bold;
}

.lanes {
    width: 16px;
    background: #dfe3e6;
    font-size: 6px;
    overflow: hidden;
}

.lanes-ruler {
    height: 14px;
    background: #0d2642;
}

.part {
    display: flex;
    justify-content: flex-end;
    height: 21px;
    margin-top: 2px;
    border: solid #333;
    border-width: 1px 0;
    background: #a8abae;
    color: #111;
}

.part.kick {
    margin-top: 25px;
}

.part span {
    height: 9px;
    background: #e6e6e6;
}

.part.line {
    background: linear-gradient(#111, #111) 0 14px / 9px 1px no-repeat, #a8abae;
}

.part.thick {
    background: linear-gradient(#111, #111) 0 12px / 9px 3px no-repeat, #a8abae;
}

.project-vbar .corner-icon {
    margin-top: 0;
    height: 14px;
    background: #5ba3ad;
}

.project-vbar .vzoom.tall {
    height: 34px;
}

.project-vbar .preset {
    margin-top: 4px;
}

.project-vbar .vzoom:last-child i {
    top: 8px;
}

.project-hbar {
    height: 12px;
    padding: 1px 0 1px 93px;
    background: linear-gradient(90deg, #30465b 93px, #a9bac8 93px);
}

.project-hbar output {
    width: 111px;
    margin-right: 1px;
    padding-left: 3px;
    background: #010203;
    font-size: 6px;
    white-space: nowrap;
}

/* Transport panel */
.transport {
    position: absolute;
    left: 19px;
    top: 12px;
    display: flex;
    gap: 3px;
    width: 591px;
    height: 39px;
    padding: 2px;
    border: 1px solid #dbe4eb;
    background: var(--panel);
}

.panel-close {
    width: 5px;
    height: 4px;
    border: 1px solid #3b4a57;
}

.meter {
    display: flex;
    gap: 1px;
    width: 9px;
    height: 34px;
    padding: 1px;
    background: #111a1f;
}

.meter i {
    flex: 1;
    background: #2c4a50;
}

.input-meter i:first-child {
    background: linear-gradient(#2c4a50 25px, #4fe0f0 25px);
}

.modes {
    width: 49px;
    height: 34px;
}

.mode {
    display: flex;
    align-items: center;
    gap: 3px;
    height: 13px;
    padding: 0 1px;
    white-space: nowrap;
}

.mode .arrow {
    margin-left: auto;
}

.mode svg {
    width: 9px;
}

.mode + .mode {
    gap: 2px;
}

.auto {
    display: flex;
    gap: 3px;
    line-height: 7px;
}

.auto button, .sync button, .marker-head button {
    width: 20px;
    height: 7px;
    line-height: 7px;
    font-size: 6px;
    background: #a3b0ba;
    color: #fff;
    white-space: nowrap;
}

.auto button {
    width: 22px;
}

.locators {
    display: grid;
    grid-template-columns: 11px 54px;
    grid-template-rows: repeat(4, 8px);
    gap: 1px;
    line-height: 8px;
}

.locators > button {
    background: #9dabb8;
    border: 1px solid #75838f;
    line-height: 6px;
    color: #eef;
}

.locators .screen {
    display: flex;
    justify-content: flex-end;
    gap: 2px;
}

.locators .faint {
    color: #4a5055;
}

.locators .faint button {
    width: 10px;
    background: #98a6b2;
    color: #fff;
    font-size: 5px;
    line-height: 7px;
}

.jog {
    width: 36px;
    height: 36px;
}

.main-transport {
    width: 156px;
}

.time {
    display: flex;
    align-items: center;
    height: 17px;
    padding: 0 1px 0 2px;
    color: #fff;
}

.nudge {
    margin-right: auto;
    line-height: 8px;
}

.time strong {
    font: 10px/14px "Liberation Sans", sans-serif;
}

.time b {
    margin-left: 29px;
}

.clock {
    width: 6px;
    height: 6px;
    margin-left: 2px;
    border-radius: 50%;
    background: #8696a4;
}

.transport-buttons {
    display: flex;
    gap: 1px;
    height: 15px;
    margin-top: 2px;
    background: #111;
    border: 1px solid #66737e;
}

.transport-buttons button {
    display: grid;
    place-items: center;
    flex: 2;
    background: linear-gradient(#3f5260, #22323e);
}

.transport-buttons .narrow {
    flex: 1;
}

.transport-buttons svg {
    width: 11px;
    height: 9px;
}

.transport-buttons .stop {
    background: linear-gradient(#aac5d0, #7799a6);
}

.transport-buttons .play {
    background: #1c3220;
}

.transport-buttons .record {
    background: #43191f;
}

.arranger {
    width: 67px;
}

.arranger .screen {
    display: flex;
    align-items: center;
    justify-content: center;
    height: 18px;
    padding-top: 6px;
}

.arranger-buttons {
    display: flex;
    gap: 1px;
    height: 14px;
    margin-top: 2px;
}

.arranger-buttons button {
    flex: 1;
    background: #93a1ae;
    border: 1px solid #7b8996;
    color: #dbe3ea;
    font-size: 6px;
}

.arranger-buttons .wide {
    flex: 2;
}

.sync {
    display: grid;
    grid-template-columns: 20px 1fr auto;
    grid-template-rows: repeat(4, 8px);
    column-gap: 3px;
    width: 65px;
    height: 34px;
    padding: 1px;
    align-items: center;
    line-height: 8px;
    font-size: 6px;
}

.sync b {
    font-size: 7px;
}

.sync .tempo {
    grid-column: 1 / -1;
    text-align: right;
}

.sync .lit {
    background: #f3a549;
    color: #111;
}

.sync .precount {
    background: #a3b0ba;
}

.markers {
    width: 52px;
    height: 34px;
    padding: 1px;
}

.marker-head {
    display: flex;
    gap: 4px;
    font-size: 6px;
    line-height: 7px;
}

.markers ol {
    display: grid;
    grid-template-columns: repeat(5, 1fr);
    margin: 1px 0 0;
    padding: 0;
    list-style: none;
    text-align: center;
    line-height: 8px;
}

.master-meter {
    display: flex;
    gap: 2px;
    width: 23px;
    height: 34px;
    padding: 1px;
    background: #111a1f;
}

.master-meter i {
    flex: 1;
    background: #2c4a50;
}

.master-meter .clip {
    background: linear-gradient(#fb0d0d 7px, #2c4a50 7px);
}

.volume {
    width: 7px;
    height: 34px;
    background: linear-gradient(#4c5c69, #4c5c69) 3px 2px / 1px 30px no-repeat;
}

.volume i {
    display: block;
    width: 7px;
    height: 3px;
    margin-top: 8px;
    background: #71818e;
}

/* Taskbar */
.taskbar {
    display: flex;
    align-items: center;
    height: 18px;
    background: linear-gradient(#3d80f2, #245edb 20%, #2159d6);
    color: #fff;
    font-size: 8px;
    line-height: 12px;
}

.start {
    display: flex;
    align-items: center;
    gap: 3px;
    width: 53px;
    height: 18px;
    padding-left: 7px;
    border-radius: 0 6px 6px 0;
    background: linear-gradient(#6cb868, #3a943a 25%, #318b31);
    font-size: 11px;
    font-weight: bold;
}

.quick {
    display: flex;
    gap: 4px;
    margin-left: 8px;
}

.quick text {
    font: bold 8px "Liberation Sans", sans-serif;
    fill: #fff;
}

.quick svg {
    width: 9px;
}

.more {
    margin: 0 6px 0 18px;
    width: 5px;
}

.tasks {
    flex: 1;
    display: flex;
    gap: 1px;
}

.tasks button {
    display: flex;
    align-items: center;
    gap: 2px;
    flex: 1;
    max-width: 66px;
    height: 15px;
    padding: 0 3px 0 5px;
    border-radius: 2px;
    background: #3c81f3;
    white-space: nowrap;
}

.tasks .arrow {
    margin-left: auto;
}

.tasks .alert {
    background: #e17a16;
}

.tasks .active {
    background: #1e4ab8;
}

.tray {
    display: flex;
    align-items: center;
    gap: 1px;
    height: 18px;
    padding: 0 7px;
    background: linear-gradient(#38b4f6, #1290e9 20%, #1190ea);
}

.tray svg {
    width: 9px;
}

.tray time {
    margin-left: 4px;
    white-space: nowrap;
}
```
